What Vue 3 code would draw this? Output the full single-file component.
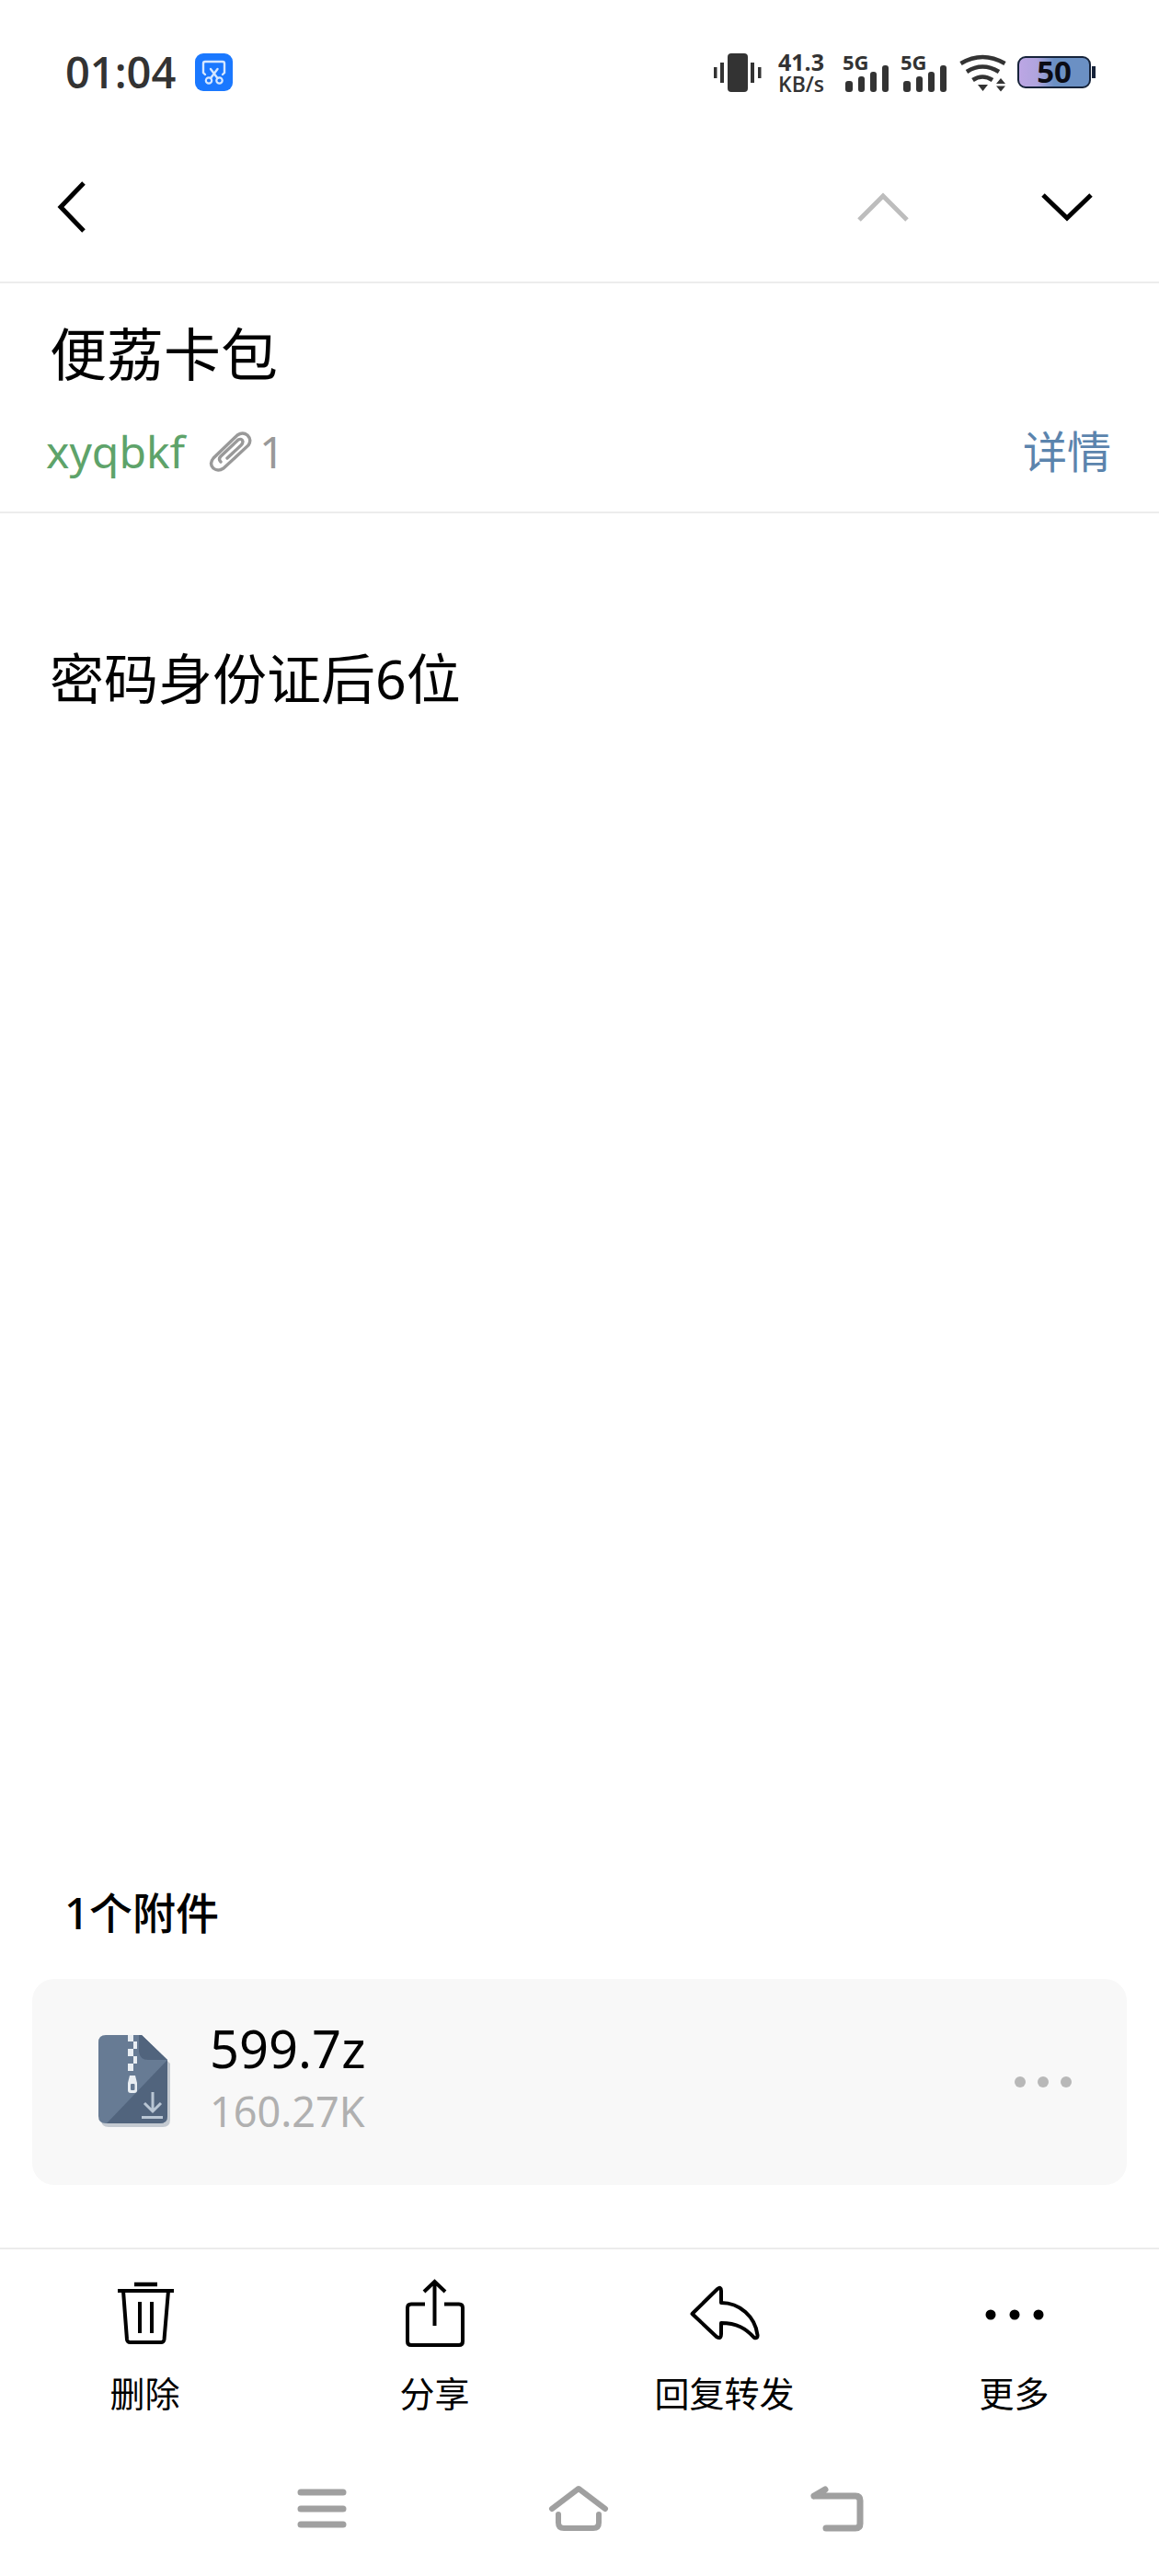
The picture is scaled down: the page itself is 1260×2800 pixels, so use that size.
<template>
  <div class="mail-page">
    <!-- status bar -->
    <div class="status-bar">
      <div class="status-left">
        <span class="clock">01:04</span>
        <svg class="shot-icon" width="41" height="41" viewBox="0 0 41 41">
          <rect width="41" height="41" rx="9" fill="#1a78ff" />
          <path d="M11 23 L9 21 V11 Q9 9 11 9 H30 Q32 9 32 11 V21 L30 23" fill="none" stroke="#d5e7ff" stroke-width="2.4" stroke-linecap="round" />
          <path d="M17 17 L24.5 27 M24.5 17 L17 27" stroke="#d5e7ff" stroke-width="2.4" stroke-linecap="round" />
          <circle cx="15" cy="29.5" r="3.2" fill="none" stroke="#d5e7ff" stroke-width="2.2" />
          <circle cx="26.5" cy="29.5" r="3.2" fill="none" stroke="#d5e7ff" stroke-width="2.2" />
        </svg>
      </div>
      <div class="status-right">
        <svg class="vibrate" width="52" height="42" viewBox="0 0 52 42">
          <rect x="15" y="0" width="22" height="42" rx="4" fill="#333" />
          <rect x="0" y="15" width="3.5" height="12" fill="#333" />
          <rect x="7" y="10" width="4" height="22" fill="#333" />
          <rect x="40" y="10" width="4" height="22" fill="#333" />
          <rect x="48" y="15" width="3.5" height="12" fill="#333" />
        </svg>
        <div class="speed">
          <span>41.3</span>
          <span>KB/s</span>
        </div>
        <div v-for="n in 2" :key="n" class="signal">
          <span class="five-g">5G</span>
          <svg width="50" height="42" viewBox="0 0 50 42">
            <rect x="3" y="30" width="8" height="12" rx="3" fill="#333" />
            <rect x="17" y="25" width="7" height="17" rx="3" fill="#333" />
            <rect x="30" y="20" width="7" height="22" rx="3" fill="#333" />
            <rect x="43" y="13" width="7" height="29" rx="3" fill="#333" />
          </svg>
        </div>
        <svg class="wifi" width="54" height="42" viewBox="0 0 54 42">
          <path d="M2.5 11 Q26 -3 50.5 11 M9 20 Q26 9 44 20 M15.5 29 Q26 22 37 29" fill="none" stroke="#333" stroke-width="4.6" />
          <path d="M21 34 H32 L26.5 41 Z M41 33 L46 27 L51 33 Z M41 35.5 H51 L46 41.5 Z" fill="#333" />
        </svg>
        <div class="battery-wrap">
          <div class="battery">50</div>
          <div class="battery-nub"></div>
        </div>
      </div>
    </div>

    <!-- top nav -->
    <div class="top-nav">
      <svg width="36" height="60" viewBox="0 0 36 60">
        <path d="M31 4 L6 30 L31 56" fill="none" stroke="#000" stroke-width="5" />
      </svg>
      <div class="nav-arrows">
        <svg width="56" height="32" viewBox="0 0 56 32">
          <path d="M2 30 L28 4 L54 30" fill="none" stroke="#bdbdbd" stroke-width="5" />
        </svg>
        <svg width="56" height="32" viewBox="0 0 56 32">
          <path d="M2 3 L28 28 L54 3" fill="none" stroke="#000" stroke-width="5" />
        </svg>
      </div>
    </div>

    <!-- subject -->
    <div class="mail-head">
      <div class="subject">便荔卡包</div>
      <div class="meta-row">
        <div class="meta-left">
          <span class="sender">xyqbkf</span>
          <svg class="clip" width="50" height="46" viewBox="0 0 50 46">
            <path d="M16 41 L43 16 Q47 10 42 5 Q37 1 31 5 L5 30 Q0 36 5 41 Q10 45 16 41 M20 30 L35 16 Q37 14 37 12 Q36 8 32 10 L13 28 Q10 31 13 34" fill="none" stroke="#999" stroke-width="3.4" stroke-linecap="round" />
          </svg>
          <span class="clip-count">1</span>
        </div>
        <span class="detail-link">详情</span>
      </div>
    </div>

    <!-- body -->
    <div class="mail-body">密码身份证后6位</div>

    <!-- attachments -->
    <div class="attach-title">1个附件</div>
    <div class="attach-card">
      <svg class="zip-icon" width="80" height="102" viewBox="0 0 80 102">
        <path d="M11 4 H50 L78 31 V92 Q78 100 70 100 H11 Q3 100 3 92 V12 Q3 4 11 4 Z" fill="#c4cad1" />
        <path d="M8 0 H47 L75 27 V88 Q75 96 67 96 H8 Q0 96 0 88 V8 Q0 0 8 0 Z" fill="#677b94" />
        <path d="M75 27 V88 Q75 96 67 96 H9 Z" fill="#51647d" />
        <path d="M44 0 L47 0 L75 27 H54 Q45 27 44 18 Z" fill="#51647d" />
        <path d="M32 0 H38 V7 H42 V15 H38 V7 H32 Z M32 15 H38 V23 H32 Z M38 23 H42 V31 H38 Z M32 31 H38 V39 H32 Z" fill="#e9eef3" />
        <path d="M34 44 H40 L42 52 V60 Q42 63 39 63 H35 Q32 63 32 60 V52 Z" fill="#e9eef3" />
        <rect x="35" y="53" width="4.5" height="7" rx="1" fill="#677b94" />
        <path d="M59 62 V82 M50 74 L59 83 L68 74" fill="none" stroke="#b9c6d4" stroke-width="3" />
        <rect x="47" y="88" width="23" height="3" fill="#b9c6d4" />
      </svg>
      <div class="file-info">
        <span class="file-name">599.7z</span>
        <span class="file-size">160.27K</span>
      </div>
      <div class="file-more">
        <i></i><i></i><i></i>
      </div>
    </div>

    <!-- toolbar -->
    <div class="toolbar">
      <div class="tool">
        <div class="tool-icon">
          <svg width="66" height="74" viewBox="0 0 66 74">
            <path d="M21 6 H46" stroke="#000" stroke-width="4.5" />
            <path d="M3 13 H64" stroke="#000" stroke-width="4" />
            <path d="M9 13 L13 66 Q13.5 69 16.5 69 H50 Q53 69 53.5 66 L58 13 M27 25 V59 M40 25 V59" fill="none" stroke="#000" stroke-width="4" />
          </svg>
        </div>
        <span>删除</span>
      </div>
      <div class="tool">
        <div class="tool-icon">
          <svg width="68" height="76" viewBox="0 0 68 76">
            <path d="M23 28.5 H8 Q4 28.5 4 32.5 V69 Q4 73 8 73 H60 Q64 73 64 69 V32.5 Q64 28.5 60 28.5 H44 M33.5 4 V52 M22 15 L33.5 4 L45 15" fill="none" stroke="#000" stroke-width="4" />
          </svg>
        </div>
        <span>分享</span>
      </div>
      <div class="tool">
        <div class="tool-icon">
          <svg width="78" height="62" viewBox="0 0 78 62">
            <path d="M3.5 32 L31 5 Q35 2 35 7 V20 C55 20 72 35 74.5 55 Q75 59 71 58 C62 48 52 42 35 42 V54 Q35 60 30 57 Z" fill="none" stroke="#000" stroke-width="4" stroke-linejoin="round" />
          </svg>
        </div>
        <span>回复转发</span>
      </div>
      <div class="tool">
        <div class="tool-icon">
          <svg class="more-dots" width="64" height="12" viewBox="0 0 64 12">
            <circle cx="6" cy="6" r="5.5" />
            <circle cx="32" cy="6" r="5.5" />
            <circle cx="58" cy="6" r="5.5" />
          </svg>
        </div>
        <span>更多</span>
      </div>
    </div>

    <!-- system nav -->
    <div class="sys-nav">
      <svg width="56" height="50" viewBox="0 0 56 50">
        <path d="M5 9 H51 M5 27 H51 M5 44 H51" stroke="#a0a0a0" stroke-width="7" stroke-linecap="round" />
      </svg>
      <svg width="68" height="52" viewBox="0 0 68 52">
        <path d="M5 27 L34 5 L63 27" fill="none" stroke="#a0a0a0" stroke-width="6" stroke-linecap="round" stroke-linejoin="round" />
        <path d="M12 33 V42 Q12 48 18 48 H50 Q56 48 56 42 V33" fill="none" stroke="#a0a0a0" stroke-width="6" stroke-linecap="round" />
      </svg>
      <svg width="60" height="52" viewBox="0 0 60 52">
        <path d="M5 13 H50 Q55 13 55 18 V43 Q55 48 50 48 H18 M5 13 L17 6" fill="none" stroke="#a0a0a0" stroke-width="7" stroke-linecap="round" stroke-linejoin="round" />
      </svg>
    </div>
  </div>
</template>

<script setup>
</script>

<style>
html, body {
  background: #fff;
}
</style>

<style scoped>
.mail-page {
  width: 1260px;
  height: 2800px;
  display: flex;
  flex-direction: column;
  background: #fff;
  color: #000;
  font-family: "Noto Sans", "Noto Sans CJK SC", sans-serif;
}

/* status bar */
.status-bar {
  height: 143px;
  box-sizing: border-box;
  padding: 58px 69px 0 71px;
  display: flex;
  justify-content: space-between;
  align-items: flex-start;
  color: #333;
}

.status-left {
  display: flex;
  align-items: center;
  gap: 21px;
  height: 41px;
}

.clock {
  font-family: "Open Sans", sans-serif;
  font-size: 47px;
  font-weight: 600;
  line-height: 41px;
}

.status-right {
  display: flex;
  align-items: flex-start;
}

.speed {
  display: flex;
  flex-direction: column;
  margin: -3px 0 0 18px;
  width: 57px;
  font-family: "Open Sans", sans-serif;
  font-size: 25px;
  font-weight: 700;
  line-height: 24px;
}

.speed span:last-child {
  font-weight: 600;
  font-size: 23px;
}

.signal {
  position: relative;
  width: 50px;
  height: 42px;
  margin-left: 13px;
}

.five-g {
  position: absolute;
  left: 0;
  top: -2px;
  font-family: "Open Sans", sans-serif;
  font-size: 22px;
  font-weight: 700;
  line-height: 22px;
}

.wifi {
  margin-left: 13px;
}

.battery-wrap {
  display: flex;
  align-items: center;
  margin: 3px 0 0 10px;
}

.battery {
  width: 80px;
  height: 35px;
  box-sizing: border-box;
  border: 2.5px solid #16233a;
  border-radius: 9px;
  background: linear-gradient(90deg, #bca6e4 0%, #b0a4de 25%, #6b90c4 50%, #6b90c4 100%);
  color: #0b0b14;
  font-family: "Open Sans", sans-serif;
  font-size: 33px;
  font-weight: 700;
  line-height: 30px;
  text-align: center;
}

.battery-nub {
  width: 4px;
  height: 13px;
  background: #16233a;
  margin-left: 1px;
}

/* nav */
.top-nav {
  height: 165px;
  box-sizing: border-box;
  padding: 0 72px 0 60px;
  display: flex;
  justify-content: space-between;
  align-items: center;
  border-bottom: 2px solid #ececec;
}

.nav-arrows {
  display: flex;
  gap: 144px;
}

/* head */
.mail-head {
  height: 250px;
  box-sizing: border-box;
  padding: 34px 52px 0 50px;
  border-bottom: 2px solid #ececec;
}

.subject {
  font-size: 62px;
  line-height: 86px;
  padding-left: 4px;
}

.meta-row {
  display: flex;
  justify-content: space-between;
  align-items: center;
  margin-top: 28px;
  height: 70px;
}

.meta-left {
  display: flex;
  align-items: center;
}

.sender {
  color: #5ea36a;
  font-size: 48px;
  line-height: 70px;
}

.clip {
  margin-left: 26px;
}

.clip-count {
  color: #999;
  font-size: 48px;
  line-height: 70px;
  margin-left: 5px;
}

.detail-link {
  color: #5b84ad;
  font-size: 48px;
  line-height: 70px;
}

/* body */
.mail-body {
  flex: 1;
  padding: 138px 0 0 54px;
  font-size: 59px;
  line-height: 82px;
}

/* attachments */
.attach-title {
  padding-left: 70px;
  font-size: 47px;
  font-weight: 500;
  line-height: 60px;
  margin-bottom: 42px;
}

.attach-card {
  margin: 0 35px;
  height: 224px;
  box-sizing: border-box;
  padding: 0 60px 0 72px;
  display: flex;
  align-items: center;
  background: #f8f8f8;
  border-radius: 24px;
}

.file-info {
  display: flex;
  flex-direction: column;
  margin-left: 41px;
  flex: 1;
}

.file-name {
  font-size: 56px;
  line-height: 63px;
}

.file-size {
  color: #b0b0b0;
  font-size: 45px;
  line-height: 74px;
}

.file-more {
  display: flex;
  gap: 13px;
}

.file-more i {
  width: 12px;
  height: 12px;
  border-radius: 50%;
  background: #b8b8b8;
}

/* toolbar */
.toolbar {
  margin-top: 68px;
  height: 215px;
  box-sizing: border-box;
  border-top: 2px solid #ececec;
  display: grid;
  grid-template-columns: repeat(4, 1fr);
}

.tool {
  display: flex;
  flex-direction: column;
  align-items: center;
  padding-top: 31px;
  font-size: 38px;
  line-height: 54px;
}

.tool-icon {
  height: 76px;
  margin-bottom: 22px;
  display: flex;
  align-items: center;
}

.more-dots {
  margin-top: 4px;
}

/* system nav */
.sys-nav {
  height: 142px;
  box-sizing: border-box;
  padding: 42px 0 0 322px;
  display: flex;
  gap: 217px;
  align-items: flex-start;
}
</style>
